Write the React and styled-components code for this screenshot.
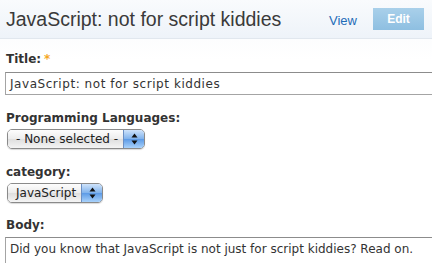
import React from 'react';
import styled, { createGlobalStyle } from 'styled-components';

const Global = createGlobalStyle`
  body {
    margin: 0;
    background: #fff;
    font-family: "DejaVu Sans", Verdana, sans-serif;
  }
`;

const Page = styled.div`
  width: 432px;
  height: 263px;
  overflow: hidden;
  background: linear-gradient(#f7f9fc, #fff 60px);
`;

const Header = styled.div`
  height: 38px;
  display: flex;
  align-items: center;
  padding: 0 8px 0 6px;
  border-bottom: 1px solid #e1e7ee;
  background: linear-gradient(#f9fbfd, #eef3f9);
`;

const Heading = styled.h1`
  flex: 1;
  margin: 0;
  font-family: "Liberation Sans", Arial, sans-serif;
  font-size: 19.5px;
  font-weight: normal;
  color: #3a3a3a;
  padding-top: 1px;
`;

const ViewLink = styled.a`
  font-family: "Liberation Sans", Arial, sans-serif;
  font-size: 13px;
  color: #1f6cb8;
  margin-right: 16px;
  margin-top: 2px;
`;

const EditButton = styled.span`
  width: 51px;
  height: 22px;
  display: flex;
  align-items: center;
  justify-content: center;
  background: linear-gradient(#a9d0ea, #8ebfe1);
  color: #fff;
  font-family: "Liberation Sans", Arial, sans-serif;
  font-weight: bold;
  font-size: 12px;
`;

const Form = styled.div`
  padding: 13px 0 0 6px;
`;

const Field = styled.div`
  margin-bottom: ${p => p.gap || 16}px;
`;

const Label = styled.div`
  font-weight: bold;
  font-size: 12px;
  color: #333;
  margin-bottom: ${p => p.space ?? 6}px;
  span {
    color: #f5a623;
    margin-left: 3px;
  }
`;

const TextInput = styled.div`
  margin-left: -1px;
  width: 440px;
  height: 23px;
  box-sizing: border-box;
  border: 1px solid #a4a4a4;
  border-top-color: #8c8c8c;
  background: #fff;
  font-size: 12px;
  color: #333;
  padding: 5px 4px;
  line-height: 13px;
  white-space: nowrap;
  letter-spacing: ${p => p.spacing || 0}px;
`;

const Select = styled.div`
  display: inline-flex;
  margin-left: 1px;
  height: 20px;
  box-sizing: border-box;
  border: 1px solid #8a8a8a;
  border-radius: 5px;
  overflow: hidden;
  box-shadow: 0 1px 1px rgba(0, 0, 0, 0.15);
`;

const SelectText = styled.div`
  display: flex;
  align-items: center;
  padding: 0 5px 0 8px;
  font-size: 12px;
  color: #222;
  background: linear-gradient(#fdfdfd, #ececec 50%, #dedede 51%, #f4f4f4);
`;

const Arrows = styled.div`
  width: 20px;
  display: flex;
  align-items: center;
  justify-content: center;
  border-left: 1px solid #6b8fc4;
  background: linear-gradient(#cfe3fb, #7fb2ec 50%, #5c9ae6 51%, #a9d2fb);
`;

const TextArea = styled(TextInput)`
  height: 40px;
  padding: 5px 4px;
`;

function SelectBox({ value }) {
  return (
    <Select>
      <SelectText>{value}</SelectText>
      <Arrows>
        <svg width="7" height="12" viewBox="0 0 7 12">
          <path d="M3.5 0.5 L6.5 4.5 L0.5 4.5 Z" fill="#111" />
          <path d="M3.5 11.5 L6.5 7.5 L0.5 7.5 Z" fill="#111" />
        </svg>
      </Arrows>
    </Select>
  );
}

export default function App() {
  return (
    <Page>
      <Global />
      <Header>
        <Heading>JavaScript: not for script kiddies</Heading>
        <ViewLink>View</ViewLink>
        <EditButton>Edit</EditButton>
      </Header>
      <Form>
        <Field gap={16}>
          <Label>
            Title:<span>*</span>
          </Label>
          <TextInput spacing={0.55}>JavaScript: not for script kiddies</TextInput>
        </Field>
        <Field gap={16}>
          <Label space={3}>Programming Languages:</Label>
          <SelectBox value="- None selected -" />
        </Field>
        <Field gap={15}>
          <Label space={3}>category:</Label>
          <SelectBox value="JavaScript" />
        </Field>
        <Field>
          <Label space={5}>Body:</Label>
          <TextArea>Did you know that JavaScript is not just for script kiddies? Read on.</TextArea>
        </Field>
      </Form>
    </Page>
  );
}
